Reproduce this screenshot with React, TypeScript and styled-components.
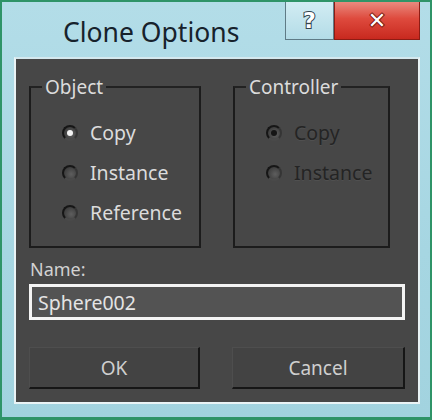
import React from 'react';
import styled, { createGlobalStyle } from 'styled-components';

const GlobalStyle = createGlobalStyle`
  html, body {
    margin: 0;
    padding: 0;
    background: #9fd0dc;
  }
  body {
    font-family: "Noto Sans", "Open Sans", sans-serif;
  }
`;

// window frame
const Frame = styled.div`
  box-sizing: border-box;
  width: 432px;
  height: 420px;
  border: 2px solid #2f9468;
  border-bottom-width: 3px;
  background: linear-gradient(180deg, #b3dde8 0%, #a6d6e2 60%, #a2d3df 100%);
  padding: 0 10px 13px 12px;
  display: flex;
  flex-direction: column;
`;

const TitleBar = styled.div`
  height: 55px;
  display: flex;
  align-items: flex-start;
`;

const Title = styled.div`
  flex: 1;
  padding: 12px 0 0 49px;
  font-size: 26.5px;
  color: #17222c;
`;

const CaptionButtons = styled.div`
  display: flex;
`;

const CaptionButton = styled.div<{ $close?: boolean }>`
  box-sizing: border-box;
  height: 38px;
  width: ${(p) => (p.$close ? '86px' : '49px')};
  display: flex;
  align-items: center;
  justify-content: center;
  font-family: "DejaVu Sans", sans-serif;
  font-weight: bold;
  font-size: 22px;
  color: #ffffff;
  background: ${(p) =>
    p.$close
      ? 'linear-gradient(180deg, #e98a7f 0%, #de4a3d 45%, #c8291f 100%)'
      : 'linear-gradient(180deg, #d2ecf3 0%, #b3dce7 100%)'};
  border: 1px solid ${(p) => (p.$close ? '#8e1c14' : '#5f7b86')};
  border-top: none;
  -webkit-text-stroke: 2px ${(p) => (p.$close ? '#7a140d' : '#33434e')};
  paint-order: stroke fill;
`;

// client area
const Client = styled.div`
  flex: 1;
  box-sizing: border-box;
  background: #474747;
  border: 2px solid #e9f3f5;
  border-top-color: #d4e8ee;
  padding: 17px 13px 0 13px;
  display: flex;
  flex-direction: column;
  color: #d9d9d9;
`;

const Groups = styled.div`
  display: flex;
  gap: 32px;
`;

const Group = styled.fieldset<{ $width: number }>`
  box-sizing: border-box;
  width: ${(p) => p.$width}px;
  height: 172px;
  margin: 0;
  padding: 0;
  border: 2px solid #1c1c1c;
  border-top-color: #222;
`;

const Legend = styled.legend`
  padding: 0 3px;
  margin: -2px 0 0 11px;
  font-size: 19px;
  line-height: 22px;
  color: #dcdcdc;
`;

const Options = styled.div`
  display: flex;
  flex-direction: column;
  gap: 15px;
  padding: 22px 0 0 31px;
`;

const Option = styled.label<{ $disabled?: boolean }>`
  display: flex;
  align-items: center;
  gap: 12px;
  height: 25px;
  font-size: 19.5px;
  color: ${(p) => (p.$disabled ? '#242424' : '#dcdcdc')};
  text-shadow: ${(p) => (p.$disabled ? '0 1px 0 rgba(90,90,90,0.5)' : 'none')};
`;

const Radio = styled.span<{ $checked?: boolean; $disabled?: boolean }>`
  position: relative;
  box-sizing: border-box;
  width: 16px;
  height: 16px;
  border-radius: 50%;
  background: radial-gradient(circle at 60% 60%, #5e5e5e 0%, #3c3c3c 75%);
  border: 2px solid #161616;
  border-right-color: #353535;
  border-bottom-color: #4a4a4a;

  &::after {
    content: '';
    display: ${(p) => (p.$checked ? 'block' : 'none')};
    position: absolute;
    left: 3px;
    top: 3px;
    width: 6px;
    height: 6px;
    border-radius: 50%;
    background: ${(p) => (p.$disabled ? '#151515' : '#f4f4f4')};
  }
`;

const NameLabel = styled.div`
  margin-top: 10px;
  padding-left: 1px;
  font-size: 18px;
  line-height: 22px;
  color: #d2d2d2;
`;

const NameInput = styled.div`
  box-sizing: border-box;
  margin-top: 4px;
  height: 36px;
  border: 3px solid #f4f4f4;
  background: #535353;
  padding-left: 6px;
  display: flex;
  align-items: center;
  font-size: 19.5px;
  color: #e4e4e4;
`;

const Buttons = styled.div`
  margin-top: 27px;
  display: flex;
  justify-content: space-between;
`;

const Button = styled.div<{ $width: number }>`
  box-sizing: border-box;
  width: ${(p) => p.$width}px;
  height: 42px;
  background: #434343;
  border: 1px solid #4e4e4e;
  border-right: 2px solid #161616;
  border-bottom: 2px solid #161616;
  display: flex;
  align-items: center;
  justify-content: center;
  font-size: 19px;
  color: #cfcfcf;
`;

export default function App() {
  return (
    <Frame>
      <GlobalStyle />
      <TitleBar>
        <Title>Clone Options</Title>
        <CaptionButtons>
          <CaptionButton>?</CaptionButton>
          <CaptionButton $close>✕</CaptionButton>
        </CaptionButtons>
      </TitleBar>
      <Client>
        <Groups>
          <Group $width={172}>
            <Legend>Object</Legend>
            <Options>
              <Option>
                <Radio $checked />
                Copy
              </Option>
              <Option>
                <Radio />
                Instance
              </Option>
              <Option>
                <Radio />
                Reference
              </Option>
            </Options>
          </Group>
          <Group $width={157}>
            <Legend>Controller</Legend>
            <Options>
              <Option $disabled>
                <Radio $checked $disabled />
                Copy
              </Option>
              <Option $disabled>
                <Radio $disabled />
                Instance
              </Option>
            </Options>
          </Group>
        </Groups>
        <NameLabel>Name:</NameLabel>
        <NameInput>Sphere002</NameInput>
        <Buttons>
          <Button $width={171}>OK</Button>
          <Button $width={173}>Cancel</Button>
        </Buttons>
      </Client>
    </Frame>
  );
}
